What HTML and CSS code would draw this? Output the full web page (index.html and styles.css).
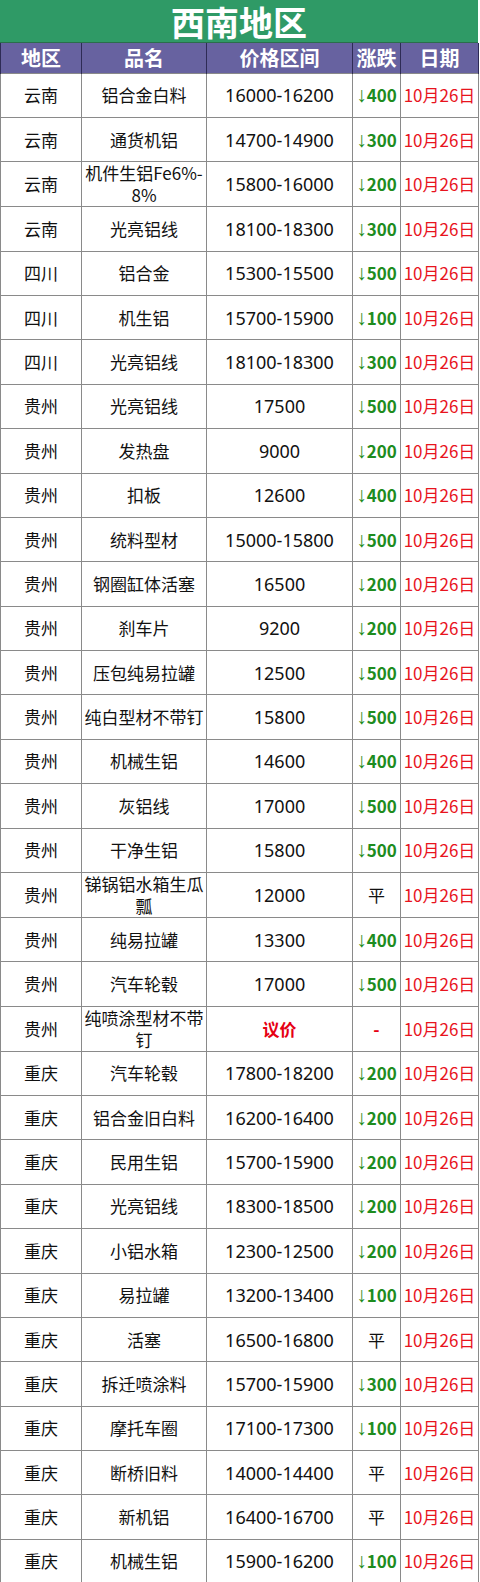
FILE: index.html
```html
<!DOCTYPE html>
<html lang="zh">
<head>
<meta charset="utf-8">
<link rel="stylesheet" href="styles.css">
</head>
<body>
<div class="sheet">
  <div class="title">西南地区</div>
  <table class="grid">
    <colgroup>
      <col class="c1"><col class="c2"><col class="c3"><col class="c4"><col class="c5">
    </colgroup>
    <thead>
      <tr class="head"><th>地区</th><th>品名</th><th>价格区间</th><th>涨跌</th><th>日期</th></tr>
    </thead>
    <tbody>
      <tr><td>云南</td><td>铝合金白料</td><td class="pr">16000-16200</td><td class="dn"><span class="arr">↓</span>400</td><td class="dt">10月26日</td></tr>
      <tr><td>云南</td><td>通货机铝</td><td class="pr">14700-14900</td><td class="dn"><span class="arr">↓</span>300</td><td class="dt">10月26日</td></tr>
      <tr><td>云南</td><td>机件生铝Fe6%-8%</td><td class="pr">15800-16000</td><td class="dn"><span class="arr">↓</span>200</td><td class="dt">10月26日</td></tr>
      <tr><td>云南</td><td>光亮铝线</td><td class="pr">18100-18300</td><td class="dn"><span class="arr">↓</span>300</td><td class="dt">10月26日</td></tr>
      <tr><td>四川</td><td>铝合金</td><td class="pr">15300-15500</td><td class="dn"><span class="arr">↓</span>500</td><td class="dt">10月26日</td></tr>
      <tr><td>四川</td><td>机生铝</td><td class="pr">15700-15900</td><td class="dn"><span class="arr">↓</span>100</td><td class="dt">10月26日</td></tr>
      <tr><td>四川</td><td>光亮铝线</td><td class="pr">18100-18300</td><td class="dn"><span class="arr">↓</span>300</td><td class="dt">10月26日</td></tr>
      <tr><td>贵州</td><td>光亮铝线</td><td class="pr">17500</td><td class="dn"><span class="arr">↓</span>500</td><td class="dt">10月26日</td></tr>
      <tr><td>贵州</td><td>发热盘</td><td class="pr">9000</td><td class="dn"><span class="arr">↓</span>200</td><td class="dt">10月26日</td></tr>
      <tr><td>贵州</td><td>扣板</td><td class="pr">12600</td><td class="dn"><span class="arr">↓</span>400</td><td class="dt">10月26日</td></tr>
      <tr><td>贵州</td><td>统料型材</td><td class="pr">15000-15800</td><td class="dn"><span class="arr">↓</span>500</td><td class="dt">10月26日</td></tr>
      <tr><td>贵州</td><td>钢圈缸体活塞</td><td class="pr">16500</td><td class="dn"><span class="arr">↓</span>200</td><td class="dt">10月26日</td></tr>
      <tr><td>贵州</td><td>刹车片</td><td class="pr">9200</td><td class="dn"><span class="arr">↓</span>200</td><td class="dt">10月26日</td></tr>
      <tr><td>贵州</td><td>压包纯易拉罐</td><td class="pr">12500</td><td class="dn"><span class="arr">↓</span>500</td><td class="dt">10月26日</td></tr>
      <tr><td>贵州</td><td>纯白型材不带钉</td><td class="pr">15800</td><td class="dn"><span class="arr">↓</span>500</td><td class="dt">10月26日</td></tr>
      <tr><td>贵州</td><td>机械生铝</td><td class="pr">14600</td><td class="dn"><span class="arr">↓</span>400</td><td class="dt">10月26日</td></tr>
      <tr><td>贵州</td><td>灰铝线</td><td class="pr">17000</td><td class="dn"><span class="arr">↓</span>500</td><td class="dt">10月26日</td></tr>
      <tr><td>贵州</td><td>干净生铝</td><td class="pr">15800</td><td class="dn"><span class="arr">↓</span>500</td><td class="dt">10月26日</td></tr>
      <tr><td>贵州</td><td>锑锅铝水箱生瓜瓢</td><td class="pr">12000</td><td>平</td><td class="dt">10月26日</td></tr>
      <tr><td>贵州</td><td>纯易拉罐</td><td class="pr">13300</td><td class="dn"><span class="arr">↓</span>400</td><td class="dt">10月26日</td></tr>
      <tr><td>贵州</td><td>汽车轮毂</td><td class="pr">17000</td><td class="dn"><span class="arr">↓</span>500</td><td class="dt">10月26日</td></tr>
      <tr><td>贵州</td><td>纯喷涂型材不带钉</td><td class="neg">议价</td><td class="neg">-</td><td class="dt">10月26日</td></tr>
      <tr><td>重庆</td><td>汽车轮毂</td><td class="pr">17800-18200</td><td class="dn"><span class="arr">↓</span>200</td><td class="dt">10月26日</td></tr>
      <tr><td>重庆</td><td>铝合金旧白料</td><td class="pr">16200-16400</td><td class="dn"><span class="arr">↓</span>200</td><td class="dt">10月26日</td></tr>
      <tr><td>重庆</td><td>民用生铝</td><td class="pr">15700-15900</td><td class="dn"><span class="arr">↓</span>200</td><td class="dt">10月26日</td></tr>
      <tr><td>重庆</td><td>光亮铝线</td><td class="pr">18300-18500</td><td class="dn"><span class="arr">↓</span>200</td><td class="dt">10月26日</td></tr>
      <tr><td>重庆</td><td>小铝水箱</td><td class="pr">12300-12500</td><td class="dn"><span class="arr">↓</span>200</td><td class="dt">10月26日</td></tr>
      <tr><td>重庆</td><td>易拉罐</td><td class="pr">13200-13400</td><td class="dn"><span class="arr">↓</span>100</td><td class="dt">10月26日</td></tr>
      <tr><td>重庆</td><td>活塞</td><td class="pr">16500-16800</td><td>平</td><td class="dt">10月26日</td></tr>
      <tr><td>重庆</td><td>拆迁喷涂料</td><td class="pr">15700-15900</td><td class="dn"><span class="arr">↓</span>300</td><td class="dt">10月26日</td></tr>
      <tr><td>重庆</td><td>摩托车圈</td><td class="pr">17100-17300</td><td class="dn"><span class="arr">↓</span>100</td><td class="dt">10月26日</td></tr>
      <tr><td>重庆</td><td>断桥旧料</td><td class="pr">14000-14400</td><td>平</td><td class="dt">10月26日</td></tr>
      <tr><td>重庆</td><td>新机铝</td><td class="pr">16400-16700</td><td>平</td><td class="dt">10月26日</td></tr>
      <tr><td>重庆</td><td>机械生铝</td><td class="pr">15900-16200</td><td class="dn"><span class="arr">↓</span>100</td><td class="dt">10月26日</td></tr>
    </tbody>
  </table>
</div>
</body>
</html>
```
FILE: styles.css
```css
html, body {
  margin: 0;
  padding: 0;
  background: #ffffff;
}
body {
  font-family: "Noto Sans CJK SC", "Noto Sans", sans-serif;
  color: #111111;
}
.sheet {
  width: 478px;
}
.title {
  height: 43px;
  line-height: 43px;
  background: #2f9a66;
  color: #ffffff;
  font-size: 34px;
  font-weight: 700;
  text-align: center;
  border-bottom: 1px solid #2a6e4c;
  box-sizing: border-box;
}
.grid {
  width: 478px;
  table-layout: fixed;
  border-collapse: collapse;
}
.c1 { width: 81px; }
.c2 { width: 125px; }
.c3 { width: 146px; }
.c4 { width: 48px; }
.c5 { width: 78px; }
.head {
  height: 30px;
  background: #6762a0;
}
.head th {
  color: #ffffff;
  font-size: 20px;
  font-weight: 700;
  line-height: 28px;
  padding: 0;
  border-left: 1px solid #2e2b55;
  border-right: 1px solid #2e2b55;
  text-align: center;
}
tbody tr {
  height: 44.38px;
}
td {
  padding: 0;
  font-size: 17px;
  line-height: 22px;
  text-align: center;
  vertical-align: middle;
  border: 1px solid #8a8a8a;
  word-break: break-all;
}
td.pr {
  font-family: "Noto Sans", "Noto Sans CJK SC", sans-serif;
  font-size: 18px;
}
td.dn {
  color: #1e8c1e;
  font-weight: 700;
  font-size: 17px;
  white-space: nowrap;
}
.arr {
  font-family: "Liberation Sans", sans-serif;
  font-weight: 400;
  font-size: 21px;
  line-height: 20px;
}
td.dt {
  color: #e8141e;
  font-size: 17px;
  white-space: nowrap;
}
td.neg {
  color: #e60012;
  font-weight: 700;
  font-size: 17px;
}
```
